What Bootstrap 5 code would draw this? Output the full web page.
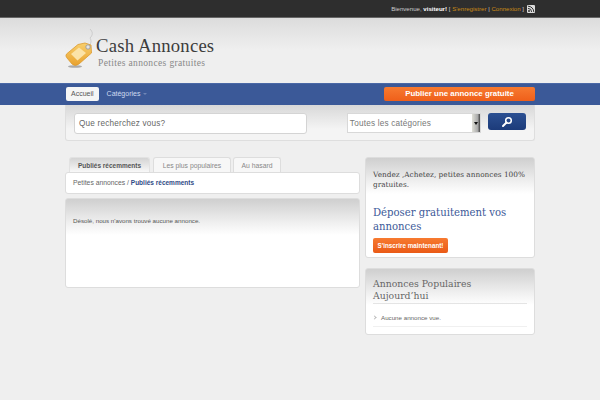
<!DOCTYPE html>
<html lang="fr">
<head>
<meta charset="utf-8">
<title>Cash Annonces</title>
<link rel="stylesheet" href="https://cdn.jsdelivr.net/npm/bootstrap@5.3.0/dist/css/bootstrap.min.css">
<style>
html,body{height:400px;overflow:hidden}
body{background:#efefef;font-family:"Liberation Sans",Arial,sans-serif;font-size:7px;color:#555;line-height:1.2}
a{text-decoration:none}
.wrap{width:470px;margin:0 auto}
.topbar{height:18px;background:#2e2e2e;border-bottom:1px solid #666;color:#ccc;font-size:6.1px}
.topbar a{color:#c98a16}
.topbar b{color:#fff}
.rss{width:8px;height:8px;margin-left:3px;display:block}
.head{height:65px;background:linear-gradient(#dcdcdc,#efefef 32px)}
.logo-title{font-family:"Liberation Serif",serif;font-size:18.700px;line-height:20px;color:#3d3d3d;letter-spacing:.2px}
.logo-sub{font-family:"Liberation Serif",serif;font-size:9.500px;line-height:11px;color:#888;letter-spacing:.35px;margin:2px 0 0 2px}
.logo-text{margin-top:10px}
.logo-icon{width:31px;height:42px;flex:none}
.bluebar{height:22px;background:#3b5998;border-top:1px solid #4a68a6}
.home{background:#f5f5f5;color:#555;border-radius:2px;font-size:7px;padding:0 5px;height:14px;line-height:14px;margin:3px 0 0 1px}
.cats{color:#cfdaf0;font-size:7px;font-weight:400;margin-left:8px;margin-top:3px;line-height:14px}
.cats i{display:inline-block;border:2px solid transparent;border-top-color:#6f85b5;margin-left:1px;vertical-align:-1px}
.publish{background:linear-gradient(#f77a30,#ef5f1a);color:#fff;font-size:7.900px;font-weight:700;width:151px;height:14px;line-height:14px;text-align:center;border-radius:2px;border:0;padding:0;margin-top:3px}
.searchbox{height:36px;background:linear-gradient(#d8d8d8,#f4f4f4 24px);border:1px solid #dedede;border-top:0;border-radius:0 0 3px 3px;padding:8px 8px 0}
.q{width:234px;height:21px;background:#fff;border:1px solid #d4d4d4;border-radius:3px;font-size:8.200px;line-height:20px;padding:0 4px;color:#666;letter-spacing:.2px}
.sel{width:135px;height:20px;margin-left:40px;background:#fff;border:1px solid #d8d8d8;font-size:8.200px;line-height:19px;padding-left:2px;color:#777;letter-spacing:.2px;position:relative}
.sel span{position:absolute;right:0;top:0;bottom:0;width:8px;background:linear-gradient(90deg,#e0e0d8,#aaa 70%,#444);display:flex;align-items:center;justify-content:center}
.sel span i{border:2px solid transparent;border-top:3px solid #111;margin-top:3px}
.go{width:38px;height:17px;margin-left:7px;background:linear-gradient(#2c5092,#1c3b7a);border-radius:3px;display:flex;align-items:center;justify-content:center;border:0;padding:0}
.tabs-row{margin-top:16px;gap:2px;padding-left:4px;height:15px}
.tabx{height:15px;line-height:15px;background:#f7f7f7;border:1px solid #ddd;border-bottom:0;border-radius:3px 3px 0 0;font-size:6.800px;font-weight:400;color:#888;text-align:center;white-space:nowrap}
.t1{width:81px;font-weight:700;color:#555;background:linear-gradient(#d4d4d4,#f8f8f8);border-color:#e2e2e2;font-size:6.500px;margin-right:1px}
.t2{width:78px}
.t3{width:48px}
.crumb{height:22px;background:#fff;border:1px solid #ddd;border-radius:3px;line-height:20px;padding-left:7px;font-size:6.800px;color:#666}
.crumb b{color:#2f4a85;font-size:6.500px}
.panel{background:linear-gradient(#cfcfcf,#f0f0f0 24px,#fff 36px);border:1px solid #ddd;border-radius:3px}
.main{height:90px;margin-top:4px;padding:17.500px 7px 0;color:#555;font-size:6.200px}
.leftcol{width:295px}
.rightcol{width:170px;margin:16px 0 0 5px}
.side1{height:101px;padding:12px 2px 0 7px;font-family:"DejaVu Serif",serif;font-size:7.350px;line-height:10px;color:#444}
.side1 h2{font-family:"DejaVu Serif",serif;font-size:10.100px;font-weight:400;line-height:13.500px;color:#3b5998;margin:16px 0 5px}
.cta{font-family:"Liberation Sans",Arial,sans-serif;background:linear-gradient(#f77a30,#ea5a16);color:#fff;font-size:6.300px;font-weight:700;width:75px;height:15px;line-height:15px;text-align:center;border-radius:2px;display:block;padding:0;border:0}
.side2{height:67px;margin-top:10px;padding:9px 7px 0}
.side2 h3{font-family:"DejaVu Serif",serif;font-size:9.300px;font-weight:400;line-height:12px;color:#666;margin:0;padding-bottom:1px;border-bottom:1px solid #e4e4e4}
.side2 p{margin:0;padding:10px 0 5px 8px;font-size:6.200px;color:#666;border-bottom:1px solid #f0f0f0;position:relative}
.side2 p:before{content:"";position:absolute;left:0;top:12px;width:3px;height:3px;border-top:1px solid #bbb;border-right:1px solid #bbb;transform:rotate(45deg)}
</style>
</head>
<body>
<div class="topbar">
  <div class="wrap d-flex justify-content-end align-items-center h-100">
    <span>Bienvenue, <b>visiteur!</b> [ <a href="#">S'enregistrer</a> | <a href="#">Connexion</a> ]</span>
    <svg class="rss" viewBox="0 0 8 8"><rect width="8" height="8" rx="1" fill="#ddd"/><circle cx="2" cy="6" r="1" fill="#333"/><path d="M1 3.4a3.6 3.6 0 0 1 3.6 3.6M1 1.2A5.8 5.8 0 0 1 6.8 7" fill="none" stroke="#333" stroke-width="1"/></svg>
  </div>
</div>
<div class="head">
  <div class="wrap d-flex align-items-start pt-2">
    <svg class="logo-icon" viewBox="0 0 31 42">
      <defs><linearGradient id="tagfill" x1="0" y1="0" x2="0" y2="1"><stop offset="0" stop-color="#f8cf6e"/><stop offset="1" stop-color="#e9a22e"/></linearGradient></defs>
      <ellipse cx="10" cy="40.500" rx="7" ry="1.300" fill="#aaa"/>
      <path d="M25 3c3 3 3 6 0 9 1 2 2 4-1 8" fill="none" stroke="#bbb" stroke-width=".6"/>
      <path d="M1.500 28 13 18.500 20 17 26 19 26.500 27 14 38Q10 41 7 38L2 32Q0 30 1.500 28Z" fill="url(#tagfill)" stroke="#dc9a30" stroke-width=".8" stroke-linejoin="round"/>
      <path d="M6 28 14 21.500 21 27 12.500 34.500Z" fill="#fbe3a8"/>
      <circle cx="23" cy="21" r="2.200" fill="#e4e4e4" stroke="#999" stroke-width=".9"/>
    </svg>
    <div class="logo-text">
      <div class="logo-title">Cash Annonces</div>
      <div class="logo-sub">Petites annonces gratuites</div>
    </div>
  </div>
</div>
<nav class="bluebar">
  <div class="wrap d-flex">
    <a class="home" href="#">Accueil</a>
    <a class="cats" href="#">Catégories <i></i></a>
    <a class="publish ms-auto" href="#">Publier une annonce gratuite</a>
  </div>
</nav>
<div class="wrap">
  <div class="searchbox d-flex align-items-start">
    <div class="q">Que recherchez vous?</div>
    <div class="sel">Toutes les catégories<span><i></i></span></div>
    <div class="go"><svg width="12" height="12" viewBox="0 0 12 12"><circle cx="7.500" cy="4.500" r="2.800" fill="none" stroke="#fff" stroke-width="1.500"/><path d="M5.500 6.500 2 10" stroke="#fff" stroke-width="2" stroke-linecap="round"/></svg></div>
  </div>
  <div class="d-flex">
    <div class="leftcol">
      <div class="tabs-row d-flex">
        <a class="tabx t1" href="#">Publiés récemments</a>
        <a class="tabx t2" href="#">Les plus populaires</a>
        <a class="tabx t3" href="#">Au hasard</a>
      </div>
      <div class="crumb">Petites annonces / <b>Publiés récemments</b></div>
      <div class="panel main">Désolé, nous n'avons trouvé aucune annonce.</div>
    </div>
    <div class="rightcol">
      <div class="panel side1">
        Vendez ,Achetez, petites annonces 100% gratuites.
        <h2>Déposer gratuitement vos annonces</h2>
        <a class="cta" href="#">S'inscrire maintenant!</a>
      </div>
      <div class="panel side2">
        <h3>Annonces Populaires Aujourd’hui</h3>
        <p>Aucune annonce vue.</p>
      </div>
    </div>
  </div>
</div>
</body>
</html>
